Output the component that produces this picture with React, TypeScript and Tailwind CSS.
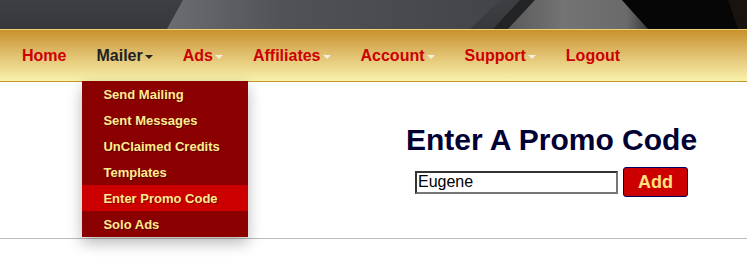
import { useState } from 'react';

const navItems = [
  { label: 'Home', caret: false },
  { label: 'Mailer', caret: true, active: true },
  { label: 'Ads', caret: true },
  { label: 'Affiliates', caret: true },
  { label: 'Account', caret: true },
  { label: 'Support', caret: true },
  { label: 'Logout', caret: false },
];

const mailerMenu = [
  'Send Mailing',
  'Sent Messages',
  'UnClaimed Credits',
  'Templates',
  'Enter Promo Code',
  'Solo Ads',
];

function HeaderArt() {
  return (
    <svg width="747" height="29" viewBox="0 0 747 29" className="block">
      <defs>
        <linearGradient id="base" x1="0" y1="0" x2="0" y2="1">
          <stop offset="0" stopColor="#3d3f43" />
          <stop offset="1" stopColor="#36383c" />
        </linearGradient>
        <linearGradient id="shine" x1="0" y1="0" x2="1" y2="0">
          <stop offset="0" stopColor="#6b6d71" />
          <stop offset="0.35" stopColor="#505256" />
          <stop offset="1" stopColor="#424448" />
        </linearGradient>
        <linearGradient id="peak" x1="0" y1="0" x2="1" y2="0">
          <stop offset="0" stopColor="#5a5a5a" />
          <stop offset="0.4" stopColor="#747474" />
          <stop offset="0.85" stopColor="#6a6a6a" />
          <stop offset="1" stopColor="#3a3a3a" />
        </linearGradient>
      </defs>
      <rect width="747" height="29" fill="url(#base)" />
      <polygon points="183,0 500,0 470,29 167,29" fill="url(#shine)" />
      <polygon points="520,0 535,0 508,29 493,29" fill="#222325" />
      <polygon points="535,0 622,0 648,29 508,29" fill="url(#peak)" />
      <polygon points="622,0 747,0 747,29 648,29" fill="#060606" />
      <polygon points="728,0 747,0 747,29 738,29" fill="#1a120c" />
    </svg>
  );
}

export default function App() {
  const [code, setCode] = useState('Eugene');

  return (
    <div className="relative min-h-[257px] bg-white font-['Liberation_Sans',Arial,sans-serif]">
      {/* Header */}
      <HeaderArt />

      {/* Nav bar */}
      <div className="relative z-10 h-[53px] border-t border-b border-t-[#f3d27a] border-b-[#c3952a] bg-gradient-to-b from-[#c8922a] to-[#f9f2ad]">
        <ul className="flex h-full items-center gap-[30px] pl-[22px]">
          {navItems.map((item) => (
            <li key={item.label} className="relative flex items-center">
              <span
                className={`text-[16px] font-bold leading-[20px] ${
                  item.active ? 'text-[#222222]' : 'text-[#cc0000]'
                }`}
              >
                {item.label}
              </span>
              {item.caret && (
                <span
                  className={`ml-[2px] mt-[3px] inline-block h-0 w-0 border-x-[4px] border-t-[4px] border-x-transparent ${
                    item.active ? 'border-t-[#222222]' : 'border-t-[#f4f0e0]'
                  }`}
                />
              )}
              {item.active && (
                <ul className="absolute left-[-14px] top-[35px] w-[166px] bg-[#8b0000] shadow-[0_6px_14px_rgba(0,0,0,0.28)]">
                  {mailerMenu.map((m) => (
                    <li
                      key={m}
                      className={`flex h-[26px] items-center pl-[21px] pt-[2px] text-[13px] font-bold text-[#ffeb8f] [text-shadow:1px_1px_0_rgba(0,0,0,0.35)] ${
                        m === 'Enter Promo Code' ? 'bg-[#cc0000]' : ''
                      }`}
                    >
                      {m}
                    </li>
                  ))}
                </ul>
              )}
            </li>
          ))}
        </ul>
      </div>

      {/* Content */}
      <div className="border-b border-[#bbbbbb] pb-[41px]">
        <div className="ml-[356px] flex flex-col items-center pt-[41px]">
          <h2 className="text-[30px] font-bold leading-[33px] text-[#000033]">Enter A Promo Code</h2>
          <div className="mt-[11px] flex items-center gap-[5px]">
            <input
              value={code}
              onChange={(e) => setCode(e.target.value)}
              className="h-[23px] w-[203px] border-2 border-t-[#333333] border-l-[#333333] border-r-[#767676] border-b-[#767676] bg-white px-[1px] text-[16px] leading-[19px] text-black outline-none"
            />
            <button className="h-[30px] w-[65px] rounded-[3px] border border-[#000066] bg-[#cc0000] text-[18px] font-bold text-[#ffe27f]">
              Add
            </button>
          </div>
        </div>
      </div>
    </div>
  );
}
